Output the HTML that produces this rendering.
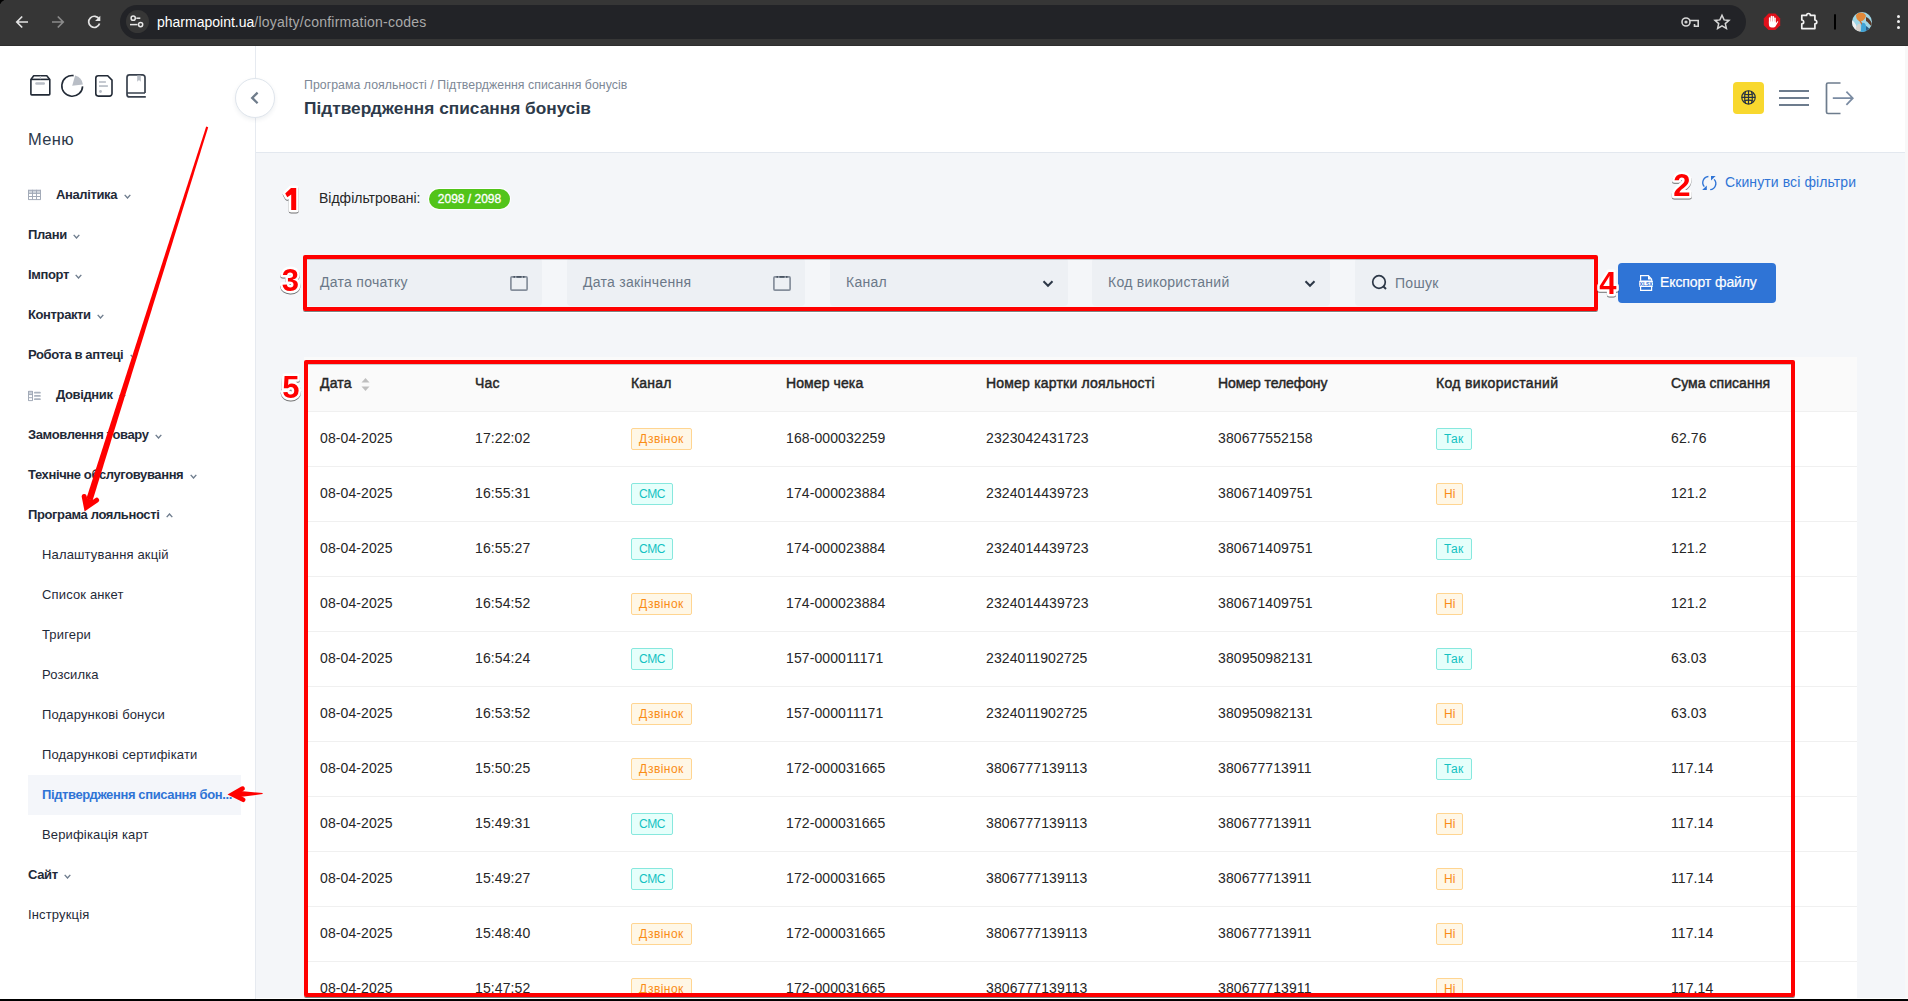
<!DOCTYPE html>
<html><head><meta charset="utf-8">
<style>
*{box-sizing:border-box;margin:0;padding:0}
html,body{width:1908px;height:1001px;overflow:hidden;background:#fff}
body{position:relative;font-family:"Liberation Sans",sans-serif;color:#262626}
.a{position:absolute;white-space:nowrap}
#chrome{position:absolute;left:0;top:0;width:1908px;height:46px;background:#363636}
#omni{position:absolute;left:120px;top:5px;width:1626px;height:34px;border-radius:17px;background:#222327}
#sidebar{position:absolute;left:0;top:46px;width:256px;height:955px;background:#fff;border-right:1px solid #e6eaf0}
#header{position:absolute;left:256px;top:46px;width:1649px;height:107px;background:#fff;border-bottom:1px solid #e3e8ef}
#content{position:absolute;left:256px;top:153px;width:1649px;height:845px;background:#f4f6f9}
#sbar{position:absolute;left:1905px;top:46px;width:3px;height:952px;background:#f8f8f8}
.mi{position:absolute;left:28px;font-size:13px;font-weight:bold;color:#1f2a38;line-height:16px;white-space:nowrap;letter-spacing:-0.38px}
.si{position:absolute;left:42px;font-size:13px;color:#1f2a38;line-height:16px;white-space:nowrap;letter-spacing:0.15px}
.chev{display:inline-block;margin-left:6.5px;vertical-align:baseline}
.chevu{display:inline-block;margin-left:7px;vertical-align:1px}
.inp{position:absolute;top:258px;height:48px;width:238px;background:#edf0f4;border-radius:4px}
.ph{position:absolute;left:16px;top:15px;font-size:14px;color:#6b7888;line-height:18px;white-space:nowrap;letter-spacing:0.28px}
.th{position:absolute;font-size:14px;color:#262626;line-height:18px;white-space:nowrap;-webkit-text-stroke:0.45px #262626;letter-spacing:0.2px}
.td{position:absolute;font-size:14px;color:#262626;line-height:18px;white-space:nowrap;letter-spacing:0.1px}
.row{position:absolute;left:304px;width:1553px;height:55px;background:#fff;border-bottom:1px solid #f0f0f0}
.tag{position:absolute;height:22px;font-size:12px;line-height:20px;padding:0 7px;border-radius:2px;border:1px solid;white-space:nowrap}
.or{background:#fff7e6;border-color:#ffd591;color:#fa8c16}
.cy{background:#e6fffb;border-color:#87e8de;color:#13c2c2}
.num{position:absolute;font-size:30px;font-weight:bold;color:#f00;line-height:30px;white-space:nowrap;
 text-shadow:2px 0 #fff,-2px 0 #fff,0 2px #fff,0 -2px #fff,1.5px 1.5px #fff,-1.5px 1.5px #fff,1.5px -1.5px #fff,-1.5px -1.5px #fff,1px 3px 1px rgba(0,0,0,.35)}
.redbox{position:absolute;border:4px solid #f00;border-radius:2px;box-shadow:0 1px 0 rgba(40,50,50,.6),0 2px 0 rgba(255,255,255,.95),inset 0 1px 0 rgba(0,0,0,.2)}

</style></head><body>
<div id="chrome">
  <div class="a" style="left:0;top:0;width:4px;height:4px;background:#000;border-radius:0"></div>
  <div class="a" style="left:0;top:0;width:8px;height:8px;background:#363636;border-top-left-radius:6px"></div>
  <svg class="a" style="left:0;top:0" width="120" height="46" viewBox="0 0 120 46">
    <g stroke="#e3e3e3" stroke-width="1.7" fill="none" stroke-linecap="butt">
      <path d="M28 22H17M22.2 16.5L16.8 22L22.2 27.5"/>
    </g>
    <g stroke="#8b8b8b" stroke-width="1.7" fill="none">
      <path d="M52 22H63M57.8 16.5L63.2 22L57.8 27.5"/>
    </g>
    <g stroke="#e3e3e3" stroke-width="1.7" fill="none">
      <path d="M99.2 19.2A5.6 5.6 0 1 0 99.6 23.6"/>
    </g>
    <path d="M100.3 15.8V21H95.1Z" fill="#e3e3e3"/>
  </svg>
  <div id="omni"></div>
  <div class="a" style="left:125.5px;top:9.5px;width:23px;height:23px;border-radius:50%;background:#363636"></div>
  <svg class="a" style="left:125px;top:9px" width="24" height="24" viewBox="0 0 24 24">
    <g stroke="#e8e8e8" stroke-width="1.5" fill="none">
      <circle cx="8.2" cy="9.2" r="2.1"/><path d="M11.3 9.2H15.3"/>
      <circle cx="15.6" cy="15.6" r="2.1"/><path d="M5 15.6H12.5"/>
    </g>
  </svg>
  <div class="a" style="left:157px;top:13px;font-size:14px;line-height:18px;color:#fff">pharmapoint.ua<span style="color:#a9a9a9;letter-spacing:0.24px">/loyalty/confirmation-codes</span></div>
  <svg class="a" style="left:1678px;top:10px" width="56" height="24" viewBox="0 0 56 24">
    <g stroke="#d6d6d6" stroke-width="1.6" fill="none">
      <circle cx="8" cy="12" r="4"/>
      <path d="M12 10.5H20.2V16.3H16.5V14"/>
    </g>
    <circle cx="8" cy="12" r="1.6" fill="#cfcfcf"/>
    <path d="M44 5.3L46.1 9.9L51 10.4L47.3 13.6L48.4 18.4L44 15.9L39.6 18.4L40.7 13.6L37 10.4L41.9 9.9Z" stroke="#d6d6d6" stroke-width="1.5" fill="none" stroke-linejoin="miter"/>
  </svg>
  <svg class="a" style="left:1760px;top:10px" width="148" height="26" viewBox="0 0 148 26">
    <path d="M8.6 3.6H15.4L20.2 8.4V15.2L15.4 20H8.6L3.8 15.2V8.4Z" fill="#e0101a"/>
    <g fill="#fff">
      <rect x="8.9" y="7.2" width="1.7" height="7" rx=".85"/>
      <rect x="10.7" y="5.7" width="1.7" height="8" rx=".85"/>
      <rect x="12.5" y="6.1" width="1.7" height="8" rx=".85"/>
      <rect x="14.2" y="7.6" width="1.6" height="6.5" rx=".8"/>
      <path d="M8.9 11.5H15.8V13.5L17.2 11.6C17.7 11 18.5 11.5 18.1 12.1L15.6 16.2C14.9 17.3 14 17.6 12.8 17.6H11.8C10 17.6 8.9 16.3 8.9 14.5Z"/>
    </g>
    <path d="M41.8 5.4H46.6A1.9 1.9 0 0 1 50.4 5.4H54.9V10A1.9 1.9 0 0 1 54.9 13.8V18.6H41.8V13.8A1.9 1.9 0 0 0 41.8 10Z" stroke="#f2f2f2" stroke-width="1.7" fill="none" stroke-linejoin="round"/>
    <rect x="74" y="4.3" width="2" height="15.2" fill="#000"/>
  </svg>
  <svg class="a" style="left:1852px;top:12px" width="20" height="20" viewBox="0 0 20 20">
    <defs><clipPath id="av"><circle cx="10" cy="10" r="10"/></clipPath></defs>
    <g clip-path="url(#av)">
      <rect width="20" height="20" fill="#9fd6e6"/>
      <path d="M0 8C3 10 5 14 6 20H0Z" fill="#f1f1f1"/>
      <path d="M3 20C4 14 6 11 8 12C9 16 8 19 8 20Z" fill="#d9d2cc"/>
      <path d="M4 3C7 -1 13 0 14 4C13 8 10 10 7 9C5 8 4 6 4 3Z" fill="#e2893a"/>
      <path d="M7 8C9 9 11 11 10 14C9 12 8 10 7 8Z" fill="#c9642a"/>
      <path d="M10 11C13 10 15 13 14 20H9C9 16 9 13 10 11Z" fill="#3fa3d6"/>
      <path d="M14 5C17 6 19 9 20 12V15C18 13 16 10 14 9Z" fill="#5a3a2a"/>
      <path d="M14 14C16 15 18 17 19 20H14Z" fill="#2a5f88"/>
    </g>
  </svg>
  <div class="a" style="left:1896.5px;top:14.5px;width:3.2px;height:3.2px;border-radius:50%;background:#f0f0f0"></div>
  <div class="a" style="left:1896.5px;top:20.3px;width:3.2px;height:3.2px;border-radius:50%;background:#f0f0f0"></div>
  <div class="a" style="left:1896.5px;top:26px;width:3.2px;height:3.2px;border-radius:50%;background:#f0f0f0"></div>
  <div class="a" style="left:0;top:45px;width:1908px;height:1px;background:#2e2e2e"></div>
</div>
<div id="sidebar">
  <svg class="a" style="left:28px;top:26px" width="122" height="28" viewBox="0 0 122 28">
    <g stroke="#222a36" stroke-width="1.6" fill="none" stroke-linejoin="round">
      <path d="M2.9 7.4V22.1A0.8 0.8 0 0 0 3.7 22.9H21A0.8 0.8 0 0 0 21.8 22.1V7.4L18.8 3.7H5.7Z"/><path d="M2.9 7.4H21.8"/>
    </g>
    <rect x="7.2" y="10.3" width="9.8" height="2.5" rx="1.25" fill="#b9bec6"/>
    <path d="M12.3 3.9V7.2" stroke="#b9bec6" stroke-width="1"/>
    <path d="M45.6 3.6A10.4 10.4 0 1 0 54.6 14.4" stroke="#222a36" stroke-width="1.6" fill="none"/>
    <path d="M44.2 13.7L47.1 3.5A10.6 10.6 0 0 1 54.9 12.6Z" fill="#b9bec6"/>
    <path d="M70.3 3.8H79.7L84 8.1V21.6A2.5 2.5 0 0 1 81.5 24.1H70.3A2.5 2.5 0 0 1 67.8 21.6V6.3A2.5 2.5 0 0 1 70.3 3.8Z" stroke="#222a36" stroke-width="1.6" fill="none"/>
    <rect x="71" y="9.2" width="6.9" height="1.6" fill="#b9bec6"/><rect x="71" y="13.2" width="8.9" height="1.7" fill="#b9bec6"/><circle cx="72.5" cy="19.5" r="1.4" fill="#b9bec6"/>
    <path d="M117 21V5.4A2.5 2.5 0 0 0 114.5 2.9H101.5A2.5 2.5 0 0 0 99 5.4V22.4A2.5 2.5 0 0 0 101.5 24.9H117.8M99 21H117" stroke="#39414d" stroke-width="1.7" fill="none"/>
    <path d="M109.2 3.6V9.8L111 8.1L112.8 9.8V3.6Z" fill="#b9bec6"/>
  </svg>
  <div class="a" style="left:28px;top:83px;font-size:16.5px;line-height:20px;color:#2d3a4a;letter-spacing:0.35px">Меню</div>
  <svg class="a" style="left:28px;top:143px" width="14" height="12" viewBox="0 0 14 12">
    <rect x="0.5" y="0.8" width="12" height="3.6" fill="#d2d7de"/>
    <g stroke="#a3abb8" stroke-width="1" fill="none"><path d="M0.5 0.8V10.8M4.5 0.8V10.8M8.5 0.8V10.8M12.5 0.8V10.8M0.5 1.3H12.5M0.5 4.4H12.5M0.5 7.5H12.5M0.5 10.6H12.5"/></g>
  </svg>
  <svg class="a" style="left:28px;top:344px" width="14" height="12" viewBox="0 0 14 12">
    <rect x="0.5" y="1.2" width="4.3" height="3.6" fill="#c9cfd8"/>
    <g stroke="#a3abb8" stroke-width="1" fill="none"><path d="M0.5 1V10.8M4.5 1V10.8M0.5 1.3H4.5M0.5 4.6H4.5M0.5 7.7H4.5M0.5 10.6H4.5"/></g>
    <rect x="6" y="1.8" width="6.8" height="1.7" rx=".85" fill="#aab2be"/><rect x="6" y="5.1" width="6.8" height="1.7" rx=".85" fill="#aab2be"/><rect x="6" y="8.3" width="6.8" height="1.7" rx=".85" fill="#aab2be"/>
  </svg>
  <div class="mi" style="left:56px;top:141px">Аналітика<svg class="chev" width="7" height="5"><path d="M0.7 0.9L3.5 4L6.3 0.9" stroke="#6f7d8e" stroke-width="1.4" fill="none"/></svg></div>
  <div class="mi" style="top:181px">Плани<svg class="chev" width="7" height="5"><path d="M0.7 0.9L3.5 4L6.3 0.9" stroke="#6f7d8e" stroke-width="1.4" fill="none"/></svg></div>
  <div class="mi" style="top:221px">Імпорт<svg class="chev" width="7" height="5"><path d="M0.7 0.9L3.5 4L6.3 0.9" stroke="#6f7d8e" stroke-width="1.4" fill="none"/></svg></div>
  <div class="mi" style="top:261px">Контракти<svg class="chev" width="7" height="5"><path d="M0.7 0.9L3.5 4L6.3 0.9" stroke="#6f7d8e" stroke-width="1.4" fill="none"/></svg></div>
  <div class="mi" style="top:301px">Робота в аптеці<svg class="chev" width="7" height="5"><path d="M0.7 0.9L3.5 4L6.3 0.9" stroke="#6f7d8e" stroke-width="1.4" fill="none"/></svg></div>
  <div class="mi" style="left:56px;top:341px">Довідник<svg class="chev" width="7" height="5"><path d="M0.7 0.9L3.5 4L6.3 0.9" stroke="#6f7d8e" stroke-width="1.4" fill="none"/></svg></div>
  <div class="mi" style="top:381px">Замовлення товару<svg class="chev" width="7" height="5"><path d="M0.7 0.9L3.5 4L6.3 0.9" stroke="#6f7d8e" stroke-width="1.4" fill="none"/></svg></div>
  <div class="mi" style="top:421px">Технічне обслуговування<svg class="chev" width="7" height="5"><path d="M0.7 0.9L3.5 4L6.3 0.9" stroke="#6f7d8e" stroke-width="1.4" fill="none"/></svg></div>
  <div class="mi" style="top:461px">Програма лояльності<svg class="chevu" width="7" height="5"><path d="M0.7 4.1L3.5 1L6.3 4.1" stroke="#6f7d8e" stroke-width="1.4" fill="none"/></svg></div>
  <div class="si" style="top:501px">Налаштування акцій</div>
  <div class="si" style="top:541px">Список анкет</div>
  <div class="si" style="top:581px">Тригери</div>
  <div class="si" style="top:621px">Розсилка</div>
  <div class="si" style="top:661px">Подарункові бонуси</div>
  <div class="si" style="top:701px">Подарункові сертифікати</div>
  <div class="a" style="left:28px;top:729px;width:213px;height:40px;background:#f4f6fa"></div>
  <div class="si" style="top:741px;color:#2f74d6;font-weight:bold;letter-spacing:-0.38px">Підтвердження списання бон...</div>
  <div class="si" style="top:781px">Верифікація карт</div>
  <div class="mi" style="top:821px">Сайт<svg class="chev" width="7" height="5"><path d="M0.7 0.9L3.5 4L6.3 0.9" stroke="#6f7d8e" stroke-width="1.4" fill="none"/></svg></div>
  <div class="mi" style="top:861px;font-weight:normal;letter-spacing:0.15px">Інструкція</div>
</div>
<div id="header">
  <div class="a" style="left:48px;top:32px;font-size:12.3px;line-height:15px;color:#7d8896;letter-spacing:0.05px">Програма лояльності / Підтвердження списання бонусів</div>
  <div class="a" style="left:48px;top:51px;font-size:17.3px;line-height:22px;font-weight:bold;color:#2d3a4a">Підтвердження списання бонусів</div>
  <div class="a" style="left:1477px;top:36px;width:31px;height:32px;border-radius:4px;background:#f8d82e"></div>
  <svg class="a" style="left:1484px;top:43px" width="17" height="17" viewBox="0 0 17 17">
    <g stroke="#263042" stroke-width="1.15" fill="none">
      <circle cx="8.5" cy="8.4" r="6.7"/><path d="M8.5 1.7V15.1M1.8 8.4H15.2"/>
      <path d="M3 4.4Q8.5 7 14 4.4M3 12.4Q8.5 9.8 14 12.4"/>
      <path d="M5.6 2.3Q3.6 8.4 5.6 14.5M11.4 2.3Q13.4 8.4 11.4 14.5"/>
    </g>
  </svg>
  <div class="a" style="left:1523px;top:44px;width:30px;height:2px;background:#6d7c8d"></div>
  <div class="a" style="left:1523px;top:51px;width:30px;height:2px;background:#6d7c8d"></div>
  <div class="a" style="left:1523px;top:58px;width:30px;height:2px;background:#6d7c8d"></div>
  <svg class="a" style="left:1568px;top:35px" width="32" height="34" viewBox="0 0 32 34">
    <path d="M16.5 2H4A1.5 1.5 0 0 0 2.5 3.5V31A1.5 1.5 0 0 0 4 32.5H16.5" stroke="#6d7c8d" stroke-width="1.7" fill="none"/>
    <path d="M8.8 17.2H28.6M22.4 10.6L28.8 17.2L22.4 23.8" stroke="#7a8ba2" stroke-width="1.7" fill="none"/>
  </svg>
</div>
<div class="a" style="left:235px;top:78px;width:40px;height:40px;border-radius:50%;background:#fff;border:1px solid #dfe5ec;box-shadow:0 2px 4px rgba(40,60,90,.08)"></div>
<svg class="a" style="left:248px;top:90px" width="14" height="16" viewBox="0 0 14 16">
  <path d="M9.6 2.6L4.2 7.9L9.6 13.2" stroke="#6f7c8b" stroke-width="2.3" fill="none"/>
</svg>
<div id="content"></div>
<div id="sbar"></div>

<div class="a" style="left:319px;top:190px;font-size:14px;line-height:16px;color:#262626">Відфільтровані:</div>
<div class="a" style="left:429px;top:189px;width:81px;height:20px;border-radius:10px;background:#52c41a;color:#fff;font-size:12px;line-height:20px;text-align:center;-webkit-text-stroke:0.3px #fff;box-shadow:0 0 0 1px #fff">2098 / 2098</div>
<svg class="a" style="left:1700px;top:174px" width="18" height="18" viewBox="0 0 18 18">
  <g stroke="#2f74d6" stroke-width="1.35" fill="none">
    <path d="M8.4 2.5A6.1 6.1 0 0 0 4.3 12.6"/><path d="M10.2 15.7A6.1 6.1 0 0 0 14.1 5.4"/>
  </g>
  <path d="M2.2 15.9H6.8V11.5Z" fill="#2f74d6"/><path d="M15.6 2.1H11V6.5Z" fill="#2f74d6"/>
</svg>
<div class="a" style="left:1725px;top:174px;font-size:14px;line-height:16px;color:#2f74d6;letter-spacing:0.1px">Скинути всі фільтри</div>

<div class="inp" style="left:304px"><div class="ph">Дата початку</div></div>
<div class="inp" style="left:567px"><div class="ph">Дата закінчення</div></div>
<div class="inp" style="left:830px"><div class="ph">Канал</div></div>
<div class="inp" style="left:1092px"><div class="ph">Код використаний</div></div>
<div class="inp" style="left:1355px"><div class="ph" style="left:40px;top:16px">Пошук</div></div>
<svg class="a" style="left:509px;top:275px" width="20" height="17" viewBox="0 0 20 17">
  <rect x="1.9" y="1.9" width="16.2" height="13.2" rx="1" stroke="#858e9b" stroke-width="1.7" fill="none"/>
  <path d="M4.5 1.9H6M7.5 1.9H12.5M14 1.9H15.5" stroke="#4a5563" stroke-width="1.8"/>
</svg>
<svg class="a" style="left:772px;top:275px" width="20" height="17" viewBox="0 0 20 17">
  <rect x="1.9" y="1.9" width="16.2" height="13.2" rx="1" stroke="#858e9b" stroke-width="1.7" fill="none"/>
  <path d="M4.5 1.9H6M7.5 1.9H12.5M14 1.9H15.5" stroke="#4a5563" stroke-width="1.8"/>
</svg>
<svg class="a" style="left:1040px;top:277px" width="16" height="13" viewBox="0 0 16 13">
  <path d="M3.5 4.2L8 8.8L12.5 4.2" stroke="#2d3847" stroke-width="2" fill="none"/>
</svg>
<svg class="a" style="left:1302px;top:277px" width="16" height="13" viewBox="0 0 16 13">
  <path d="M3.5 4.2L8 8.8L12.5 4.2" stroke="#2d3847" stroke-width="2" fill="none"/>
</svg>
<svg class="a" style="left:1370px;top:273px" width="20" height="20" viewBox="0 0 20 20">
  <circle cx="9" cy="9" r="6.3" stroke="#2d3847" stroke-width="1.7" fill="none"/>
  <path d="M13.5 13.5L16 16" stroke="#2d3847" stroke-width="1.9"/>
</svg>

<div class="a" style="left:1618px;top:263px;width:158px;height:40px;border-radius:4px;background:#2f74d6"></div>
<svg class="a" style="left:1637px;top:273px" width="18" height="20" viewBox="0 0 18 20">
  <path d="M3.6 7.8V2.6H11.4L14.6 6.2V7.8M3.6 13.8V17.4H14.6V13.8" stroke="#fff" stroke-width="1.2" fill="none"/>
  <path d="M11 2.6V6.5H14.6Z" fill="#fff"/>
  <rect x="2.2" y="7.6" width="13.8" height="6.3" rx="1" fill="#fff"/>
  <text x="9.1" y="12.6" font-size="5" font-family="Liberation Sans" font-weight="bold" fill="#2f74d6" text-anchor="middle">XLSX</text>
</svg>
<div class="a" style="left:1660px;top:273px;font-size:14px;line-height:18px;color:#fff;-webkit-text-stroke:0.2px #fff;letter-spacing:-0.1px">Експорт файлу</div>

<div class="a" style="left:304px;top:357px;width:1553px;height:55px;background:#fafafa;border-bottom:1px solid #f0f0f0"></div>
<div class="th" style="left:320px;top:374px;letter-spacing:0.2px">Дата</div>
<div class="th" style="left:475px;top:374px;letter-spacing:0.2px">Час</div>
<div class="th" style="left:631px;top:374px;letter-spacing:0.2px">Канал</div>
<div class="th" style="left:786px;top:374px;letter-spacing:0.1px">Номер чека</div>
<div class="th" style="left:986px;top:374px;letter-spacing:0.2px">Номер картки лояльності</div>
<div class="th" style="left:1218px;top:374px;letter-spacing:-0.08px">Номер телефону</div>
<div class="th" style="left:1436px;top:374px;letter-spacing:0.33px">Код використаний</div>
<div class="th" style="left:1671px;top:374px;letter-spacing:0.05px">Сума списання</div>
<svg class="a" style="left:360px;top:377px" width="11" height="15" viewBox="0 0 11 15"><path d="M5.5 1 L9.5 5.5 H1.5Z" fill="#bfbfbf"/><path d="M5.5 14 L9.5 9.5 H1.5Z" fill="#bfbfbf"/></svg>
<div class="row" style="top:412px"></div>
<div class="td" style="left:320px;top:429px">08-04-2025</div>
<div class="td" style="left:475px;top:429px">17:22:02</div>
<div class="tag or" style="left:631px;top:428px;letter-spacing:0.45px">Дзвінок</div>
<div class="td" style="left:786px;top:429px">168-000032259</div>
<div class="td" style="left:986px;top:429px">2323042431723</div>
<div class="td" style="left:1218px;top:429px">380677552158</div>
<div class="tag cy" style="left:1436px;top:428px;letter-spacing:0.3px">Так</div>
<div class="td" style="left:1671px;top:429px">62.76</div>
<div class="row" style="top:467px"></div>
<div class="td" style="left:320px;top:484px">08-04-2025</div>
<div class="td" style="left:475px;top:484px">16:55:31</div>
<div class="tag cy" style="left:631px;top:483px;letter-spacing:-0.35px">СМС</div>
<div class="td" style="left:786px;top:484px">174-000023884</div>
<div class="td" style="left:986px;top:484px">2324014439723</div>
<div class="td" style="left:1218px;top:484px">380671409751</div>
<div class="tag or" style="left:1436px;top:483px;letter-spacing:0px">Ні</div>
<div class="td" style="left:1671px;top:484px">121.2</div>
<div class="row" style="top:522px"></div>
<div class="td" style="left:320px;top:539px">08-04-2025</div>
<div class="td" style="left:475px;top:539px">16:55:27</div>
<div class="tag cy" style="left:631px;top:538px;letter-spacing:-0.35px">СМС</div>
<div class="td" style="left:786px;top:539px">174-000023884</div>
<div class="td" style="left:986px;top:539px">2324014439723</div>
<div class="td" style="left:1218px;top:539px">380671409751</div>
<div class="tag cy" style="left:1436px;top:538px;letter-spacing:0.3px">Так</div>
<div class="td" style="left:1671px;top:539px">121.2</div>
<div class="row" style="top:577px"></div>
<div class="td" style="left:320px;top:594px">08-04-2025</div>
<div class="td" style="left:475px;top:594px">16:54:52</div>
<div class="tag or" style="left:631px;top:593px;letter-spacing:0.45px">Дзвінок</div>
<div class="td" style="left:786px;top:594px">174-000023884</div>
<div class="td" style="left:986px;top:594px">2324014439723</div>
<div class="td" style="left:1218px;top:594px">380671409751</div>
<div class="tag or" style="left:1436px;top:593px;letter-spacing:0px">Ні</div>
<div class="td" style="left:1671px;top:594px">121.2</div>
<div class="row" style="top:632px"></div>
<div class="td" style="left:320px;top:649px">08-04-2025</div>
<div class="td" style="left:475px;top:649px">16:54:24</div>
<div class="tag cy" style="left:631px;top:648px;letter-spacing:-0.35px">СМС</div>
<div class="td" style="left:786px;top:649px">157-000011171</div>
<div class="td" style="left:986px;top:649px">2324011902725</div>
<div class="td" style="left:1218px;top:649px">380950982131</div>
<div class="tag cy" style="left:1436px;top:648px;letter-spacing:0.3px">Так</div>
<div class="td" style="left:1671px;top:649px">63.03</div>
<div class="row" style="top:687px"></div>
<div class="td" style="left:320px;top:704px">08-04-2025</div>
<div class="td" style="left:475px;top:704px">16:53:52</div>
<div class="tag or" style="left:631px;top:703px;letter-spacing:0.45px">Дзвінок</div>
<div class="td" style="left:786px;top:704px">157-000011171</div>
<div class="td" style="left:986px;top:704px">2324011902725</div>
<div class="td" style="left:1218px;top:704px">380950982131</div>
<div class="tag or" style="left:1436px;top:703px;letter-spacing:0px">Ні</div>
<div class="td" style="left:1671px;top:704px">63.03</div>
<div class="row" style="top:742px"></div>
<div class="td" style="left:320px;top:759px">08-04-2025</div>
<div class="td" style="left:475px;top:759px">15:50:25</div>
<div class="tag or" style="left:631px;top:758px;letter-spacing:0.45px">Дзвінок</div>
<div class="td" style="left:786px;top:759px">172-000031665</div>
<div class="td" style="left:986px;top:759px">3806777139113</div>
<div class="td" style="left:1218px;top:759px">380677713911</div>
<div class="tag cy" style="left:1436px;top:758px;letter-spacing:0.3px">Так</div>
<div class="td" style="left:1671px;top:759px">117.14</div>
<div class="row" style="top:797px"></div>
<div class="td" style="left:320px;top:814px">08-04-2025</div>
<div class="td" style="left:475px;top:814px">15:49:31</div>
<div class="tag cy" style="left:631px;top:813px;letter-spacing:-0.35px">СМС</div>
<div class="td" style="left:786px;top:814px">172-000031665</div>
<div class="td" style="left:986px;top:814px">3806777139113</div>
<div class="td" style="left:1218px;top:814px">380677713911</div>
<div class="tag or" style="left:1436px;top:813px;letter-spacing:0px">Ні</div>
<div class="td" style="left:1671px;top:814px">117.14</div>
<div class="row" style="top:852px"></div>
<div class="td" style="left:320px;top:869px">08-04-2025</div>
<div class="td" style="left:475px;top:869px">15:49:27</div>
<div class="tag cy" style="left:631px;top:868px;letter-spacing:-0.35px">СМС</div>
<div class="td" style="left:786px;top:869px">172-000031665</div>
<div class="td" style="left:986px;top:869px">3806777139113</div>
<div class="td" style="left:1218px;top:869px">380677713911</div>
<div class="tag or" style="left:1436px;top:868px;letter-spacing:0px">Ні</div>
<div class="td" style="left:1671px;top:869px">117.14</div>
<div class="row" style="top:907px"></div>
<div class="td" style="left:320px;top:924px">08-04-2025</div>
<div class="td" style="left:475px;top:924px">15:48:40</div>
<div class="tag or" style="left:631px;top:923px;letter-spacing:0.45px">Дзвінок</div>
<div class="td" style="left:786px;top:924px">172-000031665</div>
<div class="td" style="left:986px;top:924px">3806777139113</div>
<div class="td" style="left:1218px;top:924px">380677713911</div>
<div class="tag or" style="left:1436px;top:923px;letter-spacing:0px">Ні</div>
<div class="td" style="left:1671px;top:924px">117.14</div>
<div class="row" style="top:962px"></div>
<div class="td" style="left:320px;top:979px">08-04-2025</div>
<div class="td" style="left:475px;top:979px">15:47:52</div>
<div class="tag or" style="left:631px;top:978px;letter-spacing:0.45px">Дзвінок</div>
<div class="td" style="left:786px;top:979px">172-000031665</div>
<div class="td" style="left:986px;top:979px">3806777139113</div>
<div class="td" style="left:1218px;top:979px">380677713911</div>
<div class="tag or" style="left:1436px;top:978px;letter-spacing:0px">Ні</div>
<div class="td" style="left:1671px;top:979px">117.14</div>

<div class="redbox" style="left:303px;top:255px;width:1295px;height:56px"></div>
<div class="redbox" style="left:304px;top:360px;width:1491px;height:637px"></div>

<svg class="a" style="left:0;top:0" width="300" height="1001" viewBox="0 0 300 1001">
  <path d="M208.2 127.2L206.2 126.4L86.4 498.6L92.6 500.6Z" fill="#f00"/>
  <path d="M85 498L87 506L95 500.5Z" fill="#f00"/>
  <polyline points="84.2,496.5 86.3,507.2 96.6,500.2" stroke="#f00" stroke-width="5" stroke-linecap="round" stroke-linejoin="miter" fill="none"/>
  <path d="M262.6 793.1L262.6 794.1L238 797.2L238 790.8Z" fill="#f00"/>
  <path d="M241 790L234 794.4L241 798.5Z" fill="#f00"/>
  <polyline points="242.6,788.6 232.4,794.4 243.2,799.8" stroke="#f00" stroke-width="4.6" stroke-linecap="round" stroke-linejoin="miter" fill="none"/>
</svg>

<svg class="a" style="left:0;top:0;overflow:visible" width="1908" height="1001">
  <path d="M291 188H296.2V210H291.2V194.6L287.3 197.2L285.2 193.6Z" fill="#f00" stroke="#fff" stroke-width="5" stroke-linejoin="round" paint-order="stroke" style="filter:drop-shadow(0 1px 0.5px rgba(0,0,0,.55))"/>
  <text x="1673.3" y="196" font-family="Liberation Sans" font-weight="bold" font-size="31" fill="#f00" stroke="#fff" stroke-width="5" stroke-linejoin="round" paint-order="stroke" style="filter:drop-shadow(0 1px 0.5px rgba(0,0,0,.55))">2</text>
  <text x="281.8" y="291" font-family="Liberation Sans" font-weight="bold" font-size="31" fill="#f00" stroke="#fff" stroke-width="5" stroke-linejoin="round" paint-order="stroke" style="filter:drop-shadow(0 1px 0.5px rgba(0,0,0,.55))">3</text>
  <text x="1599.2" y="294" font-family="Liberation Sans" font-weight="bold" font-size="31" fill="#f00" stroke="#fff" stroke-width="5" stroke-linejoin="round" paint-order="stroke" style="filter:drop-shadow(0 1px 0.5px rgba(0,0,0,.55))">4</text>
  <text x="282.2" y="398" font-family="Liberation Sans" font-weight="bold" font-size="31" fill="#f00" stroke="#fff" stroke-width="5" stroke-linejoin="round" paint-order="stroke" style="filter:drop-shadow(0 1px 0.5px rgba(0,0,0,.55))">5</text>
</svg>

<div class="a" style="left:0;top:999px;width:1908px;height:2px;background:#000"></div>

</body></html>
